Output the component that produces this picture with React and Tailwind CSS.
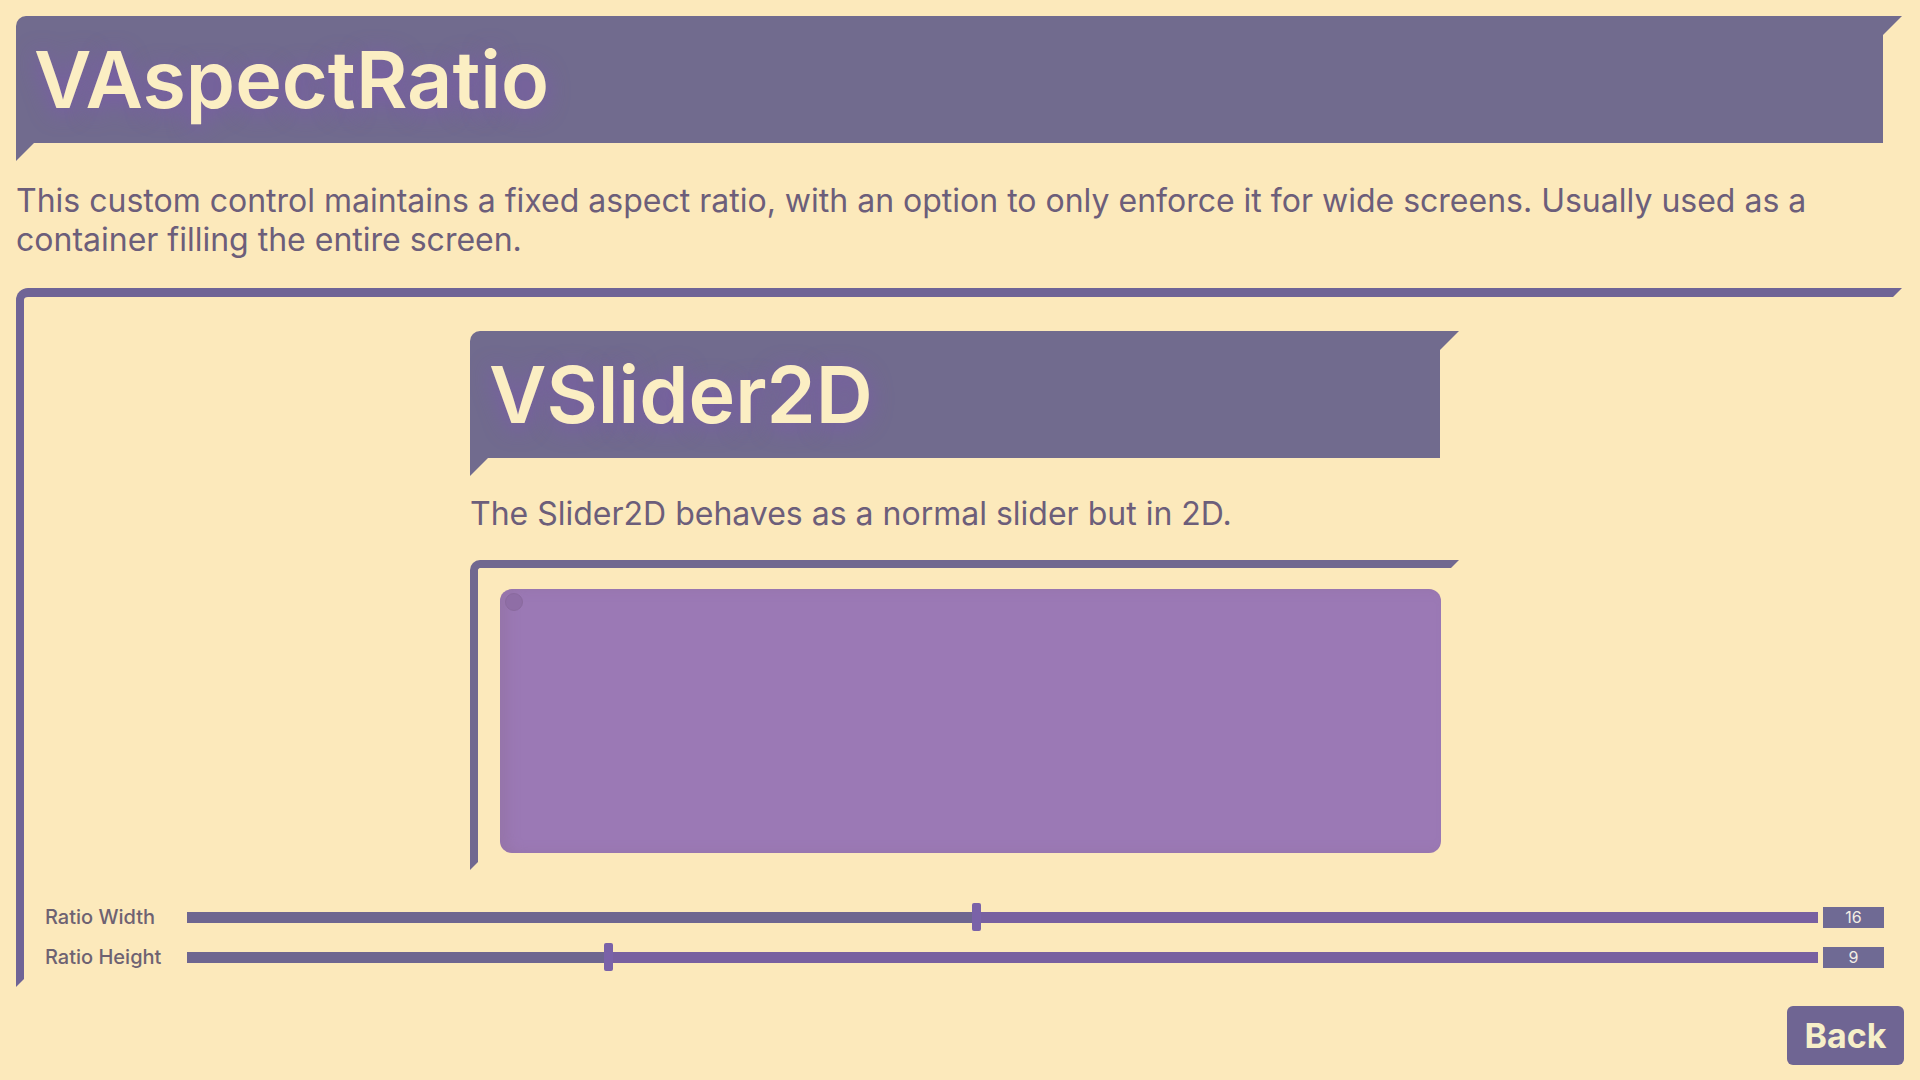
import React from 'react';

const sliders = [
    { label: 'Ratio Width', value: 16 },
    { label: 'Ratio Height', value: 9 },
];

const MIN = 1;
const MAX = 32;

const Banner = ({ title, pad }) => (
    <div className="h-[145px] bg-[#716b8e] rounded-tl-[10px] [clip-path:polygon(0_0,100%_0,calc(100%_-_19px)_19px,calc(100%_-_19px)_127px,18px_127px,0_100%)]">
        <div className={`h-[127px] flex items-center ${pad}`}>
            <h1 className="text-[79px] leading-none font-semibold text-[#fbeec3] [text-shadow:0_4px_22px_rgba(128,84,184,0.75)]">
                {title}
            </h1>
        </div>
    </div>
);

const SliderRow = ({ label, value }) => {
    const pct = ((value - MIN) / (MAX - MIN)) * 100;
    return (
        <div className="h-[28px] flex items-center pl-[21px]">
            <span className="w-[142px] text-[20px] font-medium text-[#6e6272]">{label}</span>
            <div className="relative w-[1631px] h-[28px] flex items-center">
                <div className="w-full h-[11px] flex">
                    <div className="h-full bg-[#6e6690]" style={{ width: `${pct}%` }} />
                    <div className="h-full flex-1 bg-[#7860a0]" />
                </div>
                <div
                    className="absolute top-0 w-[9px] h-[28px] -ml-[4px] rounded-[2px] bg-[#7a62a8]"
                    style={{ left: `${pct}%` }}
                />
            </div>
            <div className="ml-[5px] w-[61px] h-[21px] bg-[#6f6a94] flex items-center justify-center text-[16px] leading-none text-[#f3eee4]">
                {value}
            </div>
        </div>
    );
};

const App = () => {
    return (
        <div className="w-[1920px] h-[1080px] overflow-hidden bg-[#fce9bb] pt-[16px] pl-[16px] pr-[16px] flex flex-col font-['Inter',sans-serif]">
            <div className="w-[1886px]">
                <Banner title="VAspectRatio" pad="pl-[18px]" />
            </div>

            <p className="mt-[20px] w-[1886px] text-[32px] leading-[39px] text-[#6c5e7a]">
                This custom control maintains a fixed aspect ratio, with an option to only enforce it for wide screens. Usually used as a container filling the entire screen.
            </p>

            <div className="mt-[29px] w-[1886px] h-[699px] border-t-[9px] border-l-[8px] border-[#6f6496] rounded-tl-[12px] [clip-path:polygon(0_0,100%_0,calc(100%_-_9px)_9px,calc(100%_-_9px)_calc(100%_-_8px),8px_calc(100%_-_8px),0_100%)]">
                <div className="pt-[34px] ml-[446px] w-[989px]">
                    <Banner title="VSlider2D" pad="pl-[19px]" />

                    <p className="mt-[18px] text-[32px] leading-[39px] text-[#6c5e7a]">
                        The Slider2D behaves as a normal slider but in 2D.
                    </p>

                    <div className="mt-[27px] h-[310px] border-t-[8px] border-l-[8px] border-[#716890] rounded-tl-[10px] pt-[21px] pl-[22px] [clip-path:polygon(0_0,100%_0,calc(100%_-_8px)_8px,calc(100%_-_8px)_calc(100%_-_8px),8px_calc(100%_-_8px),0_100%)]">
                        <div className="relative w-[941px] h-[264px] rounded-[12px] bg-[#9b79b5] shadow-[inset_8px_0_12px_rgba(140,110,150,0.35)]">
                            <div className="absolute top-[4px] left-[5px] w-[18px] h-[18px] rounded-full bg-[#8f6ea6] border border-[#8a6a9e]" />
                        </div>
                    </div>
                </div>

                <div className="mt-[33px] flex flex-col gap-[12px]">
                    {sliders.map((s) => (
                        <SliderRow key={s.label} label={s.label} value={s.value} />
                    ))}
                </div>
            </div>

            <button className="mt-[19px] self-end w-[117px] h-[59px] rounded-[6px] bg-[#6f6593] text-[34px] font-bold text-[#f6efc8] leading-none">
                Back
            </button>
        </div>
    );
};

export default App;
